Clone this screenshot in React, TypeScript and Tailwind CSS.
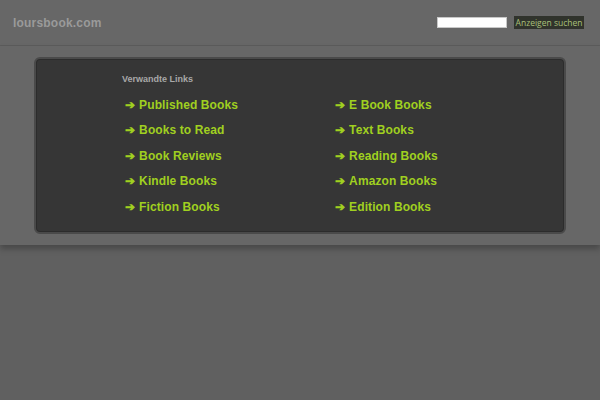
import React from "react";

const left = ["Published Books", "Books to Read", "Book Reviews", "Kindle Books", "Fiction Books"];
const right = ["E Book Books", "Text Books", "Reading Books", "Amazon Books", "Edition Books"];

function LinkItem({ label }: { label: string }) {
  return (
    <a href="#" className="flex items-center h-[25.5px] text-[12px] font-bold text-[#a0d020] no-underline tracking-[0.1px]">
      <span className="mr-[4px]">➔</span>
      <span>{label}</span>
    </a>
  );
}

export default function App() {
  return (
    <div className="w-[600px] h-[400px] bg-[#606060] overflow-hidden" style={{ fontFamily: '"Liberation Sans", Arial, sans-serif' }}>
      <div className="h-[46px] bg-[#676767] border-b border-[#5c5c5c] flex items-center justify-between pl-[13px] pr-[16px]">
        <div className="text-[12px] font-bold text-[#9a9a9a] tracking-[0.2px]">loursbook.com</div>
        <div className="flex items-center gap-[7px] -mt-[1px]">
          <div className="w-[70px] h-[11px] bg-white border border-[#c8c8c8]" />
          <div className="w-[70px] h-[13px] bg-[#30332c] text-[#a9c07a] text-[8.5px] leading-[13px] text-center whitespace-nowrap" style={{ fontFamily: '"Open Sans", "DejaVu Sans", sans-serif' }}>Anzeigen suchen</div>
        </div>
      </div>
      <div className="bg-[#676767] pt-[11px] pb-[11px] shadow-[0_4px_6px_rgba(0,0,0,0.25)] relative">
        <div className="mx-[34px] h-[177px] bg-[#363636] rounded-[6px] border-2 border-[#4a4a4a] shadow-[inset_0_0_0_1px_#2c2c2c] pl-[86px] pt-[14px]">
          <div className="text-[9px] font-bold text-[#a8a8a8] h-[14px]">Verwandte Links</div>
          <div className="flex mt-[5px] pl-[3px]">
            <div className="w-[210px] flex flex-col">
              {left.map((l) => <LinkItem key={l} label={l} />)}
            </div>
            <div className="flex flex-col">
              {right.map((l) => <LinkItem key={l} label={l} />)}
            </div>
          </div>
        </div>
      </div>
    </div>
  );
}
